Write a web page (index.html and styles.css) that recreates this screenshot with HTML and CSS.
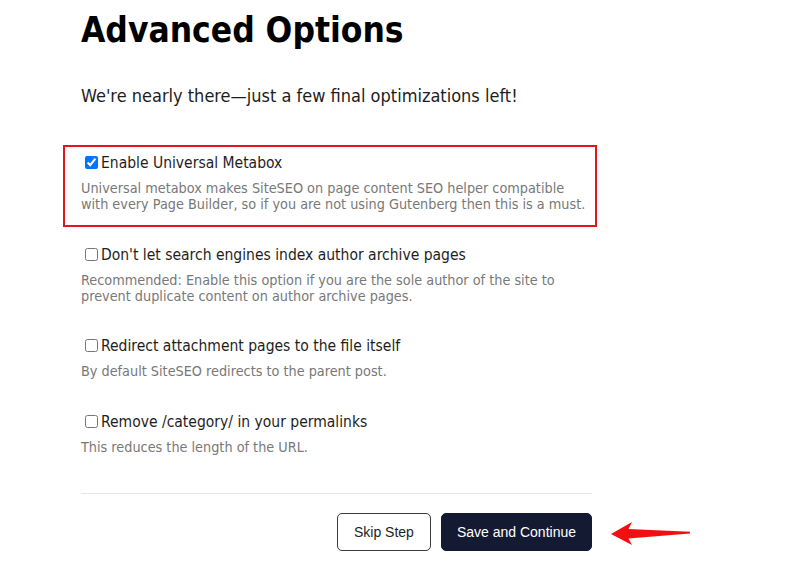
FILE: index.html
```html
<!DOCTYPE html>
<html lang="en">
<head>
<meta charset="utf-8">
<title>Advanced Options</title>
<link rel="stylesheet" href="styles.css">
</head>
<body>
<main class="page">
  <h1 class="title">Advanced Options</h1>
  <p class="lead">We're nearly there—just a few final optimizations left!</p>
  <div class="options">
    <div class="option option--highlight">
      <label class="option-label"><input type="checkbox" checked>Enable Universal Metabox</label>
      <p class="option-desc">Universal metabox makes SiteSEO on page content SEO helper compatible with every Page Builder, so if you are not using Gutenberg then this is a must.</p>
    </div>
    <div class="option">
      <label class="option-label"><input type="checkbox">Don't let search engines index author archive pages</label>
      <p class="option-desc">Recommended: Enable this option if you are the sole author of the site to prevent duplicate content on author archive pages.</p>
    </div>
    <div class="option">
      <label class="option-label"><input type="checkbox">Redirect attachment pages to the file itself</label>
      <p class="option-desc">By default SiteSEO redirects to the parent post.</p>
    </div>
    <div class="option">
      <label class="option-label"><input type="checkbox">Remove /category/ in your permalinks</label>
      <p class="option-desc">This reduces the length of the URL.</p>
    </div>
  </div>
  <div class="actions">
    <button class="btn btn--ghost" type="button">Skip Step</button>
    <button class="btn btn--primary" type="button">Save and Continue</button>
    <svg class="pointer-arrow" width="90" height="35" viewBox="0 0 90 35" aria-hidden="true">
      <path d="M6 19 L27 7 L23.5 14 L85 16.8 L85 18.6 L23.5 23.5 L27 30 Z" fill="#f01010"/>
    </svg>
  </div>
</main>
</body>
</html>
```

FILE: styles.css
```css
html, body {
  margin: 0;
  padding: 0;
  background: #ffffff;
}

body {
  font-family: "DejaVu Sans Condensed", "DejaVu Sans", Verdana, sans-serif;
  font-stretch: condensed;
  color: #1e1e1e;
}

.page {
  width: 511px;
  padding: 10px 0 0 81px;
}

.title {
  margin: 0;
  font-size: 35px;
  line-height: 40px;
  font-weight: bold;
  color: #000000;
}

.lead {
  margin: 34px 0 0;
  font-size: 18px;
  line-height: 24px;
  color: #1d1d1d;
}

.options {
  display: flex;
  flex-direction: column;
  gap: 10px;
  margin: 37px 0 0 -18px;
  width: 534px;
}

.option {
  border: 2px solid transparent;
  padding: 6px 4px 12.5px 16px;
}

.option--highlight {
  border-color: #e3141c;
}

.option-label {
  display: block;
  font-size: 15.5px;
  line-height: 20px;
  color: #1e1e1e;
}

.option-label input {
  margin: 3px 3px 3px 4px;
  width: 13px;
  height: 13px;
  vertical-align: -1px;
}

.option-desc {
  margin: 7px 0 0;
  font-size: 14.3px;
  line-height: 16px;
  color: #787878;
}

.actions {
  position: relative;
  display: flex;
  justify-content: flex-end;
  gap: 10px;
  margin-top: 24px;
  padding-top: 19px;
  border-top: 1px solid #e6e6e6;
}

.btn {
  font-family: "Liberation Sans", Arial, sans-serif;
  font-stretch: normal;
  font-size: 14px;
  height: 38px;
  border-radius: 5px;
  cursor: pointer;
}

.btn--ghost {
  padding: 0 16px;
  background: #ffffff;
  color: #1e1e1e;
  border: 1px solid #3a3a3a;
}

.btn--primary {
  padding: 0 15px;
  background: #151a33;
  color: #ffffff;
  border: 1px solid #151a33;
}

.pointer-arrow {
  position: absolute;
  left: 524px;
  top: 21px;
}
```
